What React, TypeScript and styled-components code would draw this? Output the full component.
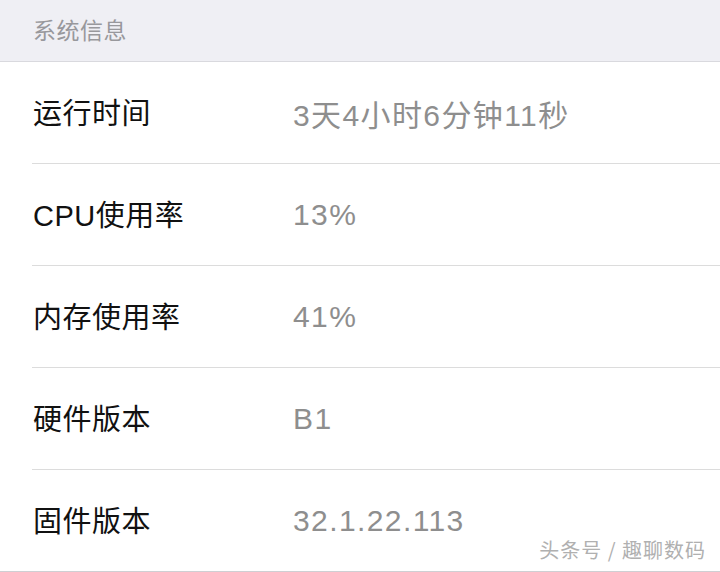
import React from "react";
import styled, { createGlobalStyle } from "styled-components";

const GlobalStyle = createGlobalStyle`
  html, body {
    margin: 0;
    padding: 0;
    background: #ffffff;
  }
  body {
    font-family: "Noto Sans CJK SC", "Noto Sans", sans-serif;
    -webkit-font-smoothing: antialiased;
  }
`;

const rows = [
  { label: "运行时间", value: "3天4小时6分钟11秒" },
  { label: "CPU使用率", value: "13%" },
  { label: "内存使用率", value: "41%" },
  { label: "硬件版本", value: "B1" },
  { label: "固件版本", value: "32.1.22.113" },
];

export default function App() {
  return (
    <>
      <GlobalStyle />
      <Page>
        <SectionHeader>系统信息</SectionHeader>
        <List>
          {rows.map((r, i) => (
            <Row key={r.label} last={i === rows.length - 1}>
              <Label>{r.label}</Label>
              <Value>{r.value}</Value>
            </Row>
          ))}
        </List>
        <Watermark>头条号 / 趣聊数码</Watermark>
      </Page>
    </>
  );
}

const Page = styled.div`
  position: relative;
  width: 720px;
  height: 572px;
  overflow: hidden;
  background: #ffffff;
`;

const SectionHeader = styled.div`
  height: 57px;
  padding-bottom: 4px;
  display: flex;
  align-items: center;
  padding-left: 33px;
  background: #efeff4;
  border-bottom: 1px solid #d9d9de;
  color: #98989c;
  font-size: 23px;
  letter-spacing: 0.5px;
`;

const List = styled.div`
  display: flex;
  flex-direction: column;
`;

const Row = styled.div<{ last: boolean }>`
  position: relative;
  height: 97px;
  padding-bottom: 4px;
  margin-bottom: 1px;
  display: flex;
  align-items: center;
  padding-left: 33px;

  &::after {
    content: "";
    position: absolute;
    bottom: -1px;
    left: ${(p) => (p.last ? 0 : "32px")};
    right: 0;
    height: 1px;
    background: ${(p) => (p.last ? "#cfcfd3" : "#dcdcdc")};
  }
`;

const Label = styled.div`
  width: 260px;
  color: #111111;
  font-size: 29px;
  font-family: "Liberation Sans", "Noto Sans CJK SC", sans-serif;
  letter-spacing: 0.5px;
`;

const Value = styled.div`
  padding-top: 5px;
  color: #8e8e8e;
  font-size: 30px;
  font-family: "Liberation Sans", "Noto Sans CJK SC", sans-serif;
  letter-spacing: 1.4px;
`;

const Watermark = styled.div`
  position: absolute;
  right: 14px;
  bottom: 8px;
  color: #b0b0b0;
  font-size: 20px;
  letter-spacing: 1px;
  text-shadow: 0 0 1px #ffffff;
`;
